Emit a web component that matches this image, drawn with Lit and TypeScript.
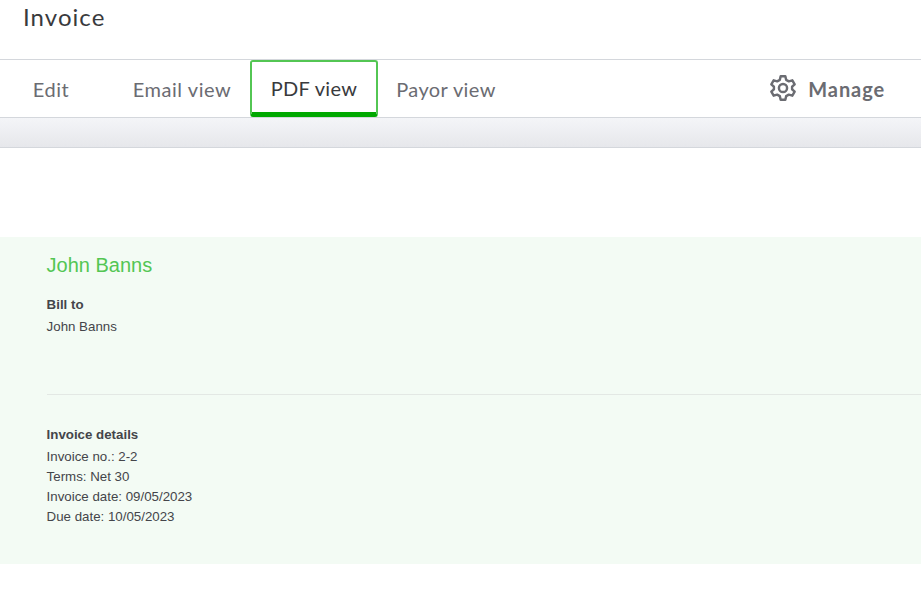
import { LitElement, html, css } from "lit";
import { customElement } from "lit/decorators.js";

@customElement("app-root")
export class AppRoot extends LitElement {
  static styles = css`
    :host { display: block; width: 921px; height: 596px; overflow: hidden; background: #fff; font-family: Lato, "Open Sans", sans-serif; }
    .title { padding: 2px 0 0 23px; font-size: 24px; line-height: 30px; color: #393a3d; letter-spacing: 1.05px; border-bottom: 1px solid #d4d7dc; height: 57px; }
    .tabs { display: flex; align-items: stretch; height: 57px; border-bottom: 1px solid #d4d7dc; padding-left: 12px; }
    .tab { display: flex; align-items: center; justify-content: center; box-sizing: border-box; font-size: 20px; color: #6b6c72; padding-top: 1px; letter-spacing: 0.55px; }
    .edit { width: 78px; }
    .email { width: 160px; padding-left: 24px; }
    .pdf { width: 128px; color: #393a3d; border: 2px solid #53c653; border-bottom: 5px solid #00a800; border-radius: 3px; padding-top: 2px; letter-spacing: 0.3px; }
    .payor { width: 136px; letter-spacing: 0.4px; }
    .manage { margin-left: auto; display: flex; align-items: center; gap: 11px; padding-right: 36px; font-size: 20px; font-weight: 700; color: #6b6c72; letter-spacing: 0.9px; }
    .manage svg { display: block; margin-top: -2px; }
    .band { height: 29px; background: linear-gradient(#f4f5f8, #e6e7eb); border-bottom: 1px solid #d4d7dc; }
    .gap { height: 89px; }
    .doc { height: 327px; box-sizing: border-box; background: #f3fbf4; padding: 16px 0 0 46.6px; font-family: "Liberation Sans", Arial, sans-serif; color: #44454a; font-size: 13.3px; line-height: 20px; }
    .name { font-size: 20px; line-height: 24px; color: #53c653; }
    .label { font-weight: 700; }
    .bill { margin-top: 18px; height: 99px; border-bottom: 1px solid #e3e8e4; }
    .bill .label { margin-bottom: 2px; }
    .details { margin-top: 30px; }
    .details .label { margin-bottom: 2px; }
  `;

  render() {
    return html`
      <div class="title">Invoice</div>
      <div class="tabs">
        <div class="tab edit">Edit</div>
        <div class="tab email">Email view</div>
        <div class="tab pdf">PDF view</div>
        <div class="tab payor">Payor view</div>
        <div class="manage">
          <svg width="28" height="28" viewBox="0 0 24 24" fill="none" stroke="#6b6c72" stroke-width="2.1" stroke-linejoin="round">
            <circle cx="12" cy="12" r="3.5"></circle>
            <path d="M10 2h4l.7 3 2.3 1.3 3-.9 2 3.4-2.2 2.1v2.2l2.2 2.1-2 3.4-3-.9-2.3 1.3-.7 3h-4l-.7-3L7 17.7l-3 .9-2-3.4 2.2-2.1v-2.2L2 8.8l2-3.4 3 .9L9.300 5z"></path>
          </svg>
          <span>Manage</span>
        </div>
      </div>
      <div class="band"></div>
      <div class="gap"></div>
      <div class="doc">
        <div class="name">John Banns</div>
        <div class="bill">
          <div class="label">Bill to</div>
          <div>John Banns</div>
        </div>
        <div class="details">
          <div class="label">Invoice details</div>
          <div>Invoice no.: 2-2</div>
          <div>Terms: Net 30</div>
          <div>Invoice date: 09/05/2023</div>
          <div>Due date: 10/05/2023</div>
        </div>
      </div>
    `;
  }
}
